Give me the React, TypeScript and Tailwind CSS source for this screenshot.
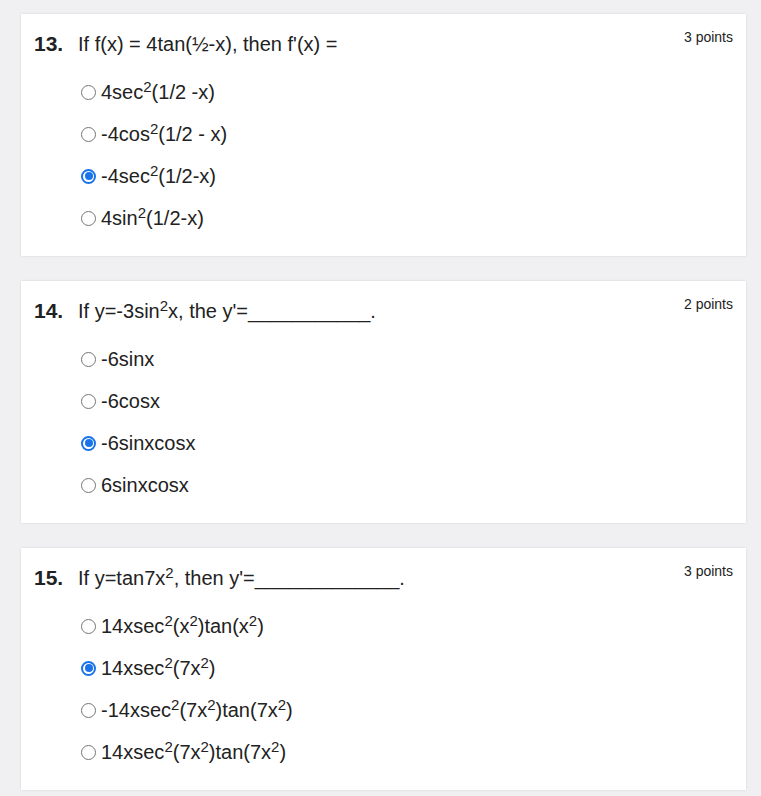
import React from "react";

type Question = {
  num: number;
  points: number;
  title: React.ReactNode;
  options: React.ReactNode[];
  answer: number;
};

const questions: Question[] = [
  {
    num: 13,
    points: 3,
    title: <>If f(x) = 4tan(½-x), then f'(x) =</>,
    options: [
      <>4sec<sup>2</sup>(1/2 -x)</>,
      <>-4cos<sup>2</sup>(1/2 - x)</>,
      <>-4sec<sup>2</sup>(1/2-x)</>,
      <>4sin<sup>2</sup>(1/2-x)</>,
    ],
    answer: 2,
  },
  {
    num: 14,
    points: 2,
    title: <>If y=-3sin<sup>2</sup>x, the y'=___________.</>,
    options: [<>-6sinx</>, <>-6cosx</>, <>-6sinxcosx</>, <>6sinxcosx</>],
    answer: 2,
  },
  {
    num: 15,
    points: 3,
    title: <>If y=tan7x<sup>2</sup>, then y'=_____________.</>,
    options: [
      <>14xsec<sup>2</sup>(x<sup>2</sup>)tan(x<sup>2</sup>)</>,
      <>14xsec<sup>2</sup>(7x<sup>2</sup>)</>,
      <>-14xsec<sup>2</sup>(7x<sup>2</sup>)tan(7x<sup>2</sup>)</>,
      <>14xsec<sup>2</sup>(7x<sup>2</sup>)tan(7x<sup>2</sup>)</>,
    ],
    answer: 1,
  },
];

function Radio({ checked }: { checked: boolean }) {
  if (checked) {
    return (
      <span className="w-[15px] h-[15px] rounded-full border-2 border-[#1a73e8] bg-white flex items-center justify-center shrink-0">
        <span className="w-[8px] h-[8px] rounded-full bg-[#1a73e8]" />
      </span>
    );
  }
  return <span className="w-[15px] h-[15px] rounded-full border border-[#767676] bg-white shrink-0" />;
}

function Card({ q }: { q: Question }) {
  return (
    <div className="bg-white shadow-[0_0_2px_rgba(0,0,0,0.12)] pl-[13px] pr-[13px] pt-[18px] pb-[17px]">
      <div className="flex items-start justify-between">
        <div className="flex items-center h-[24px] text-[20px] text-[#222]">
          <span className="w-[44px] font-bold text-[21px]">{q.num}.</span>
          <span>{q.title}</span>
        </div>
        <span className="text-[14px] text-[#222] -mt-[5px]">{q.points} points</span>
      </div>
      <div className="mt-[15px] pl-[47px] flex flex-col">
        {q.options.map((opt, i) => (
          <div key={i} className="h-[42px] flex items-center gap-[5px] text-[20px] text-[#222]">
            <Radio checked={i === q.answer} />
            <span>{opt}</span>
          </div>
        ))}
      </div>
    </div>
  );
}

export default function App() {
  return (
    <div
      className="min-h-[796px] bg-[#f0f0f2] pt-[14px] pl-[21px] pr-[15px] pb-[4px] flex flex-col gap-[25px]"
      style={{ fontFamily: '"Liberation Sans", Arial, sans-serif' }}
    >
      {questions.map((q) => (
        <Card key={q.num} q={q} />
      ))}
    </div>
  );
}
